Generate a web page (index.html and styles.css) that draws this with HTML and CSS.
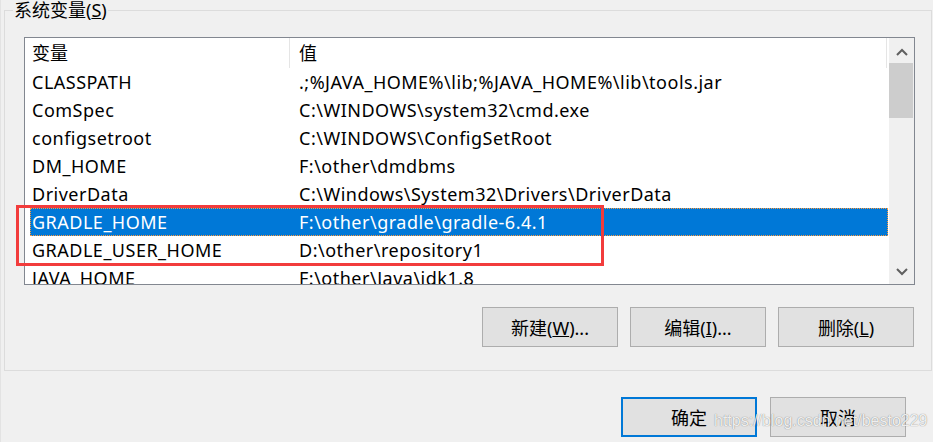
FILE: index.html
```html
<!DOCTYPE html>
<html lang="zh-CN">
<head>
<meta charset="UTF-8">
<title>环境变量</title>
<link rel="stylesheet" href="styles.css">
</head>
<body>
<div class="window">
  <div class="group">
    <div class="group-title">系统变量(<u>S</u>)</div>
    <div class="listbox">
      <div class="list-main">
        <div class="list-header">
          <div class="hcell">变量</div>
          <div class="hcell value-head">值</div>
        </div>
        <div class="list-rows">
          <div class="row"><span class="name">CLASSPATH</span><span class="value">.;%JAVA_HOME%\lib;%JAVA_HOME%\lib\tools.jar</span></div>
          <div class="row"><span class="name">ComSpec</span><span class="value">C:\WINDOWS\system32\cmd.exe</span></div>
          <div class="row"><span class="name">configsetroot</span><span class="value">C:\WINDOWS\ConfigSetRoot</span></div>
          <div class="row"><span class="name">DM_HOME</span><span class="value">F:\other\dmdbms</span></div>
          <div class="row"><span class="name">DriverData</span><span class="value">C:\Windows\System32\Drivers\DriverData</span></div>
          <div class="row selected"><span class="name">GRADLE_HOME</span><span class="value">F:\other\gradle\gradle-6.4.1</span></div>
          <div class="row"><span class="name">GRADLE_USER_HOME</span><span class="value">D:\other\repository1</span></div>
          <div class="row"><span class="name">JAVA_HOME</span><span class="value">F:\other\Java\jdk1.8</span></div>
        </div>
      </div>
      <div class="scrollbar">
        <div class="sb-btn sb-up">
          <svg width="12" height="8" viewBox="0 0 12 8"><path d="M1 7 L6 2 L11 7" fill="none" stroke="#606060" stroke-width="2"/></svg>
        </div>
        <div class="sb-track"><div class="sb-thumb"></div></div>
        <div class="sb-btn sb-down">
          <svg width="12" height="8" viewBox="0 0 12 8"><path d="M1 1 L6 6 L11 1" fill="none" stroke="#606060" stroke-width="2"/></svg>
        </div>
      </div>
    </div>
    <div class="group-actions">
      <button class="btn">新建(<u>W</u>)...</button>
      <button class="btn">编辑(<u>I</u>)...</button>
      <button class="btn">删除(<u>L</u>)</button>
    </div>
  </div>
  <div class="dialog-actions">
    <button class="btn default">确定</button>
    <button class="btn">取消</button>
  </div>
  <div class="highlight"></div>
  <div class="watermark">https://blog.csdn.net/besto229</div>
</div>
</body>
</html>
```

FILE: styles.css
```css
body {
  margin: 0;
  background-color: #f0f0f0;
  color: #000;
  font-family: "Noto Sans", "Noto Sans CJK SC", sans-serif;
  font-size: 18px;
}

.window {
  position: relative;
  width: 933px;
  height: 442px;
  box-sizing: border-box;
  border-left: 1px solid #e3e3e3;
  padding-top: 10px;
  overflow: hidden;
}

/* group box "系统变量" */
.group {
  margin-left: 3px;
  width: 928px;
  height: 361px;
  box-sizing: border-box;
  border: 1px solid #dcdcdc;
  display: flex;
  flex-direction: column;
}

.group-title {
  align-self: flex-start;
  margin: -11px 0 0 8px;
  padding: 0 1px;
  height: 20px;
  line-height: 20px;
  background-color: #f0f0f0;
}

.listbox {
  margin: 17px 16px 0 19px;
  height: 248px;
  box-sizing: border-box;
  border: 1px solid #828790;
  background-color: #fff;
  display: flex;
}

.list-main {
  flex: 1;
  overflow: hidden;
}

.list-header {
  display: grid;
  grid-template-columns: 265px 597px;
  height: 30px;
}

.hcell {
  border-right: 1px solid #e5e5e5;
  padding-left: 7px;
  line-height: 30px;
}

.value-head {
  padding-left: 9px;
}

.list-rows {
  padding-left: 5px;
  letter-spacing: 0.5px;
}

.row {
  display: grid;
  grid-template-columns: 260px 1fr;
  align-items: center;
  height: 28px;
  margin-right: 1px;
  white-space: nowrap;
}

.row .name {
  padding-left: 2px;
}

.row .value {
  padding-left: 9px;
}

.row.selected {
  background-color: #0078d7;
  color: #fff;
  outline: 1px dotted #ff9a3c;
  outline-offset: -1px;
}

.scrollbar {
  width: 25px;
  background-color: #f0f0f0;
  display: flex;
  flex-direction: column;
}

.sb-btn {
  height: 25px;
  display: flex;
  justify-content: center;
  align-items: center;
}

.sb-up {
  padding-top: 3px;
  height: 22px;
}

.sb-track {
  flex: 1;
}

.sb-thumb {
  height: 55px;
  margin-right: 1px;
  background-color: #cdcdcd;
}

/* buttons */
.btn {
  width: 136px;
  height: 40px;
  padding: 0;
  border: 1px solid #adadad;
  background-color: #e1e1e1;
  color: #000;
  font: inherit;
}

.group-actions {
  display: flex;
  justify-content: flex-end;
  gap: 12px;
  margin: 22px 17px 0 0;
}

.dialog-actions {
  display: flex;
  justify-content: flex-end;
  gap: 13px;
  margin: 26px 27px 0 0;
}

.btn.default {
  border: 2px solid #0078d7;
}

/* red annotation box drawn on top of the list */
.highlight {
  position: absolute;
  left: 15px;
  top: 205px;
  width: 588px;
  height: 61px;
  box-sizing: border-box;
  border: 3px solid #f23c3c;
}

.watermark {
  position: absolute;
  left: 713px;
  top: 413px;
  font-family: "Liberation Sans", sans-serif;
  font-size: 16px;
  line-height: 16px;
  color: rgba(255, 255, 255, 0.9);
  text-shadow: 0 0 1px rgba(0, 0, 0, 0.55);
}
```
